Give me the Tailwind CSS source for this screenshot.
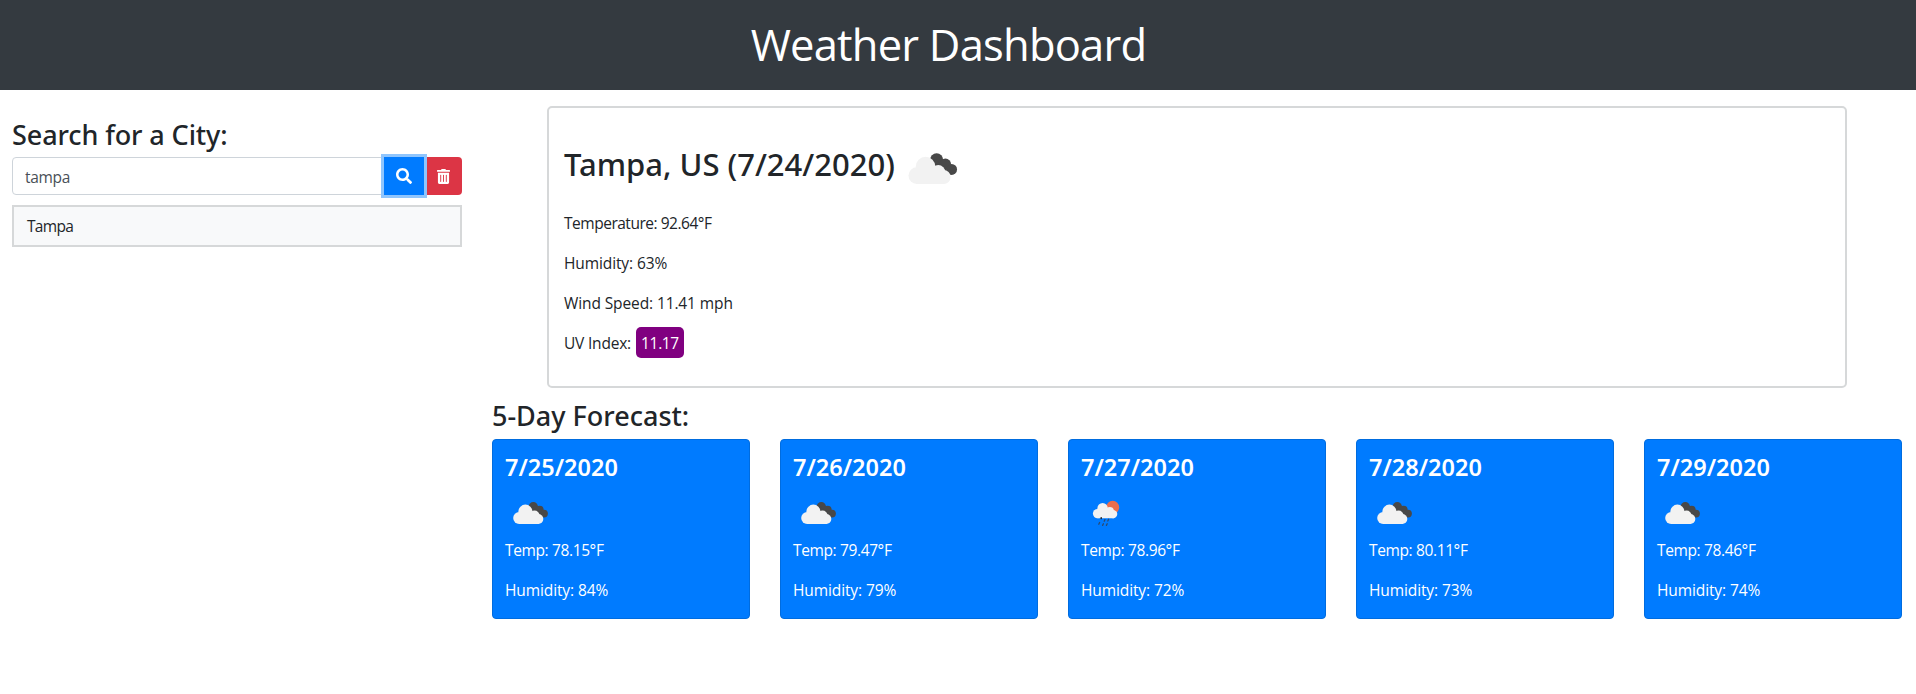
<!DOCTYPE html>
<html lang="en">
<head>
<meta charset="utf-8">
<title>Weather Dashboard</title>
<script src="https://cdn.jsdelivr.net/npm/@tailwindcss/browser@4"></script>
</head>
<body class="bg-white text-[#212529] font-['Open_Sans',sans-serif] text-[15.5px] leading-6">
<!-- Shared weather icons -->
<svg class="hidden">
  <symbol id="clouds" viewBox="0 0 50 50">
    <g fill="#484848"><circle cx="28.3" cy="17.8" r="4.7"/><circle cx="34.6" cy="20.8" r="4"/><circle cx="39" cy="24.600" r="3.900"/><path d="M26 16 38 27H30z"/></g>
    <g fill="#f2f2f2"><circle cx="14.2" cy="29" r="6"/><circle cx="20.4" cy="22.6" r="7"/><circle cx="29.5" cy="26.5" r="5"/><circle cx="33.3" cy="30" r="5"/><path d="M14 24h16l4 11H14z"/></g>
  </symbol>
  <symbol id="rain" viewBox="0 0 50 50">
    <circle cx="31.7" cy="18.3" r="6.5" fill="#ec6e4c"/>
    <g fill="#f2f2f2"><circle cx="16.6" cy="24.6" r="4.7"/><circle cx="21.6" cy="19.2" r="5.2"/><circle cx="28.8" cy="22.2" r="4.1"/><circle cx="32.1" cy="25.1" r="4.2"/><path d="M16 21h13l4 8.3H16.500z"/></g>
    <g stroke="#2c4a70" stroke-width="1.3" stroke-linecap="round"><path d="M20.200 28.800v.6" stroke="#222" stroke-width="1.500"/><path d="m24 30.500-.8 1.700M27.600 30.300l-.8 1.700M18.600 33.500l-.8 1.700M22.400 34.800l-.8 1.600M26.200 34.800l-.8 1.600"/></g>
  </symbol>
</svg>

<header class="h-[90px] bg-[#343a40] text-white flex justify-center pr-[19px]">
  <h1 class="mt-3 text-[43.5px] leading-[66px] tracking-[-0.78px]">Weather Dashboard</h1>
</header>

<div class="flex">
  <aside class="w-[450px] ml-3 mt-7 shrink-0">
    <h2 class="font-['Noto_Sans',sans-serif] font-medium text-[27px] leading-[33px] tracking-[-0.1px] mb-1.5">Search for a City:</h2>
    <div class="flex h-[38px]">
      <input value="tampa" class="w-[372px] h-[38px] border border-[#ced4da] rounded-l px-3 pt-px text-[#495057] tracking-[-0.3px]">
      <button class="relative z-10 w-10 bg-[#007bff] shadow-[0_0_0_3px_#8fc5fd] flex items-center justify-center" aria-label="Search">
        <svg class="size-4" viewBox="0 0 512 512" fill="#fff"><path d="M505 442.700 405.300 343c-4.500-4.500-10.600-7-17-7H372c27.600-35.300 44-79.700 44-128C416 93.100 322.900 0 208 0S0 93.100 0 208s93.100 208 208 208c48.300 0 92.700-16.400 128-44v16.300c0 6.400 2.500 12.500 7 17l99.700 99.700c9.400 9.400 24.600 9.400 33.900 0l28.300-28.300c9.400-9.400 9.400-24.600.1-34zM208 336c-70.700 0-128-57.200-128-128 0-70.700 57.200-128 128-128 70.700 0 128 57.200 128 128 0 70.700-57.200 128-128 128z"/></svg>
      </button>
      <button class="w-[38px] bg-[#dc3545] rounded-r flex items-center justify-center" aria-label="Clear">
        <svg class="w-[13px] h-[15px]" viewBox="0 0 448 512" fill="#fff"><path d="M32 464a48 48 0 0 0 48 48h288a48 48 0 0 0 48-48V128H32zm272-256a16 16 0 0 1 32 0v224a16 16 0 0 1-32 0zm-96 0a16 16 0 0 1 32 0v224a16 16 0 0 1-32 0zm-96 0a16 16 0 0 1 32 0v224a16 16 0 0 1-32 0zM432 32H312l-9.400-18.700A24 24 0 0 0 281.100 0H166.800a23.700 23.700 0 0 0-21.400 13.300L136 32H16A16 16 0 0 0 0 48v32a16 16 0 0 0 16 16h416a16 16 0 0 0 16-16V48a16 16 0 0 0-16-16z"/></svg>
      </button>
    </div>
    <ul class="mt-2.5">
      <li class="h-[42px] border-2 border-[#d6d8d9] bg-[#f8f9fa] px-[13px] pt-[7px] tracking-[-0.7px]">Tampa</li>
    </ul>
  </aside>

  <main class="w-[1410px] ml-[30px] shrink-0 pt-4">
    <section class="ml-[55px] w-[1300px] h-[282px] border-2 border-[#d6d8d9] rounded-[5px] pl-[15px] pt-[27px]">
      <div class="flex h-[70px]">
        <h2 class="w-[333px] whitespace-nowrap font-['Noto_Sans',sans-serif] font-medium text-[31px] leading-[38px] pt-2.5">Tampa, US (7/24/2020)</h2>
        <svg class="size-[70px]"><use href="#clouds"/></svg>
      </div>
      <div class="flex flex-col gap-4 pt-1.5">
        <p class="tracking-[-0.48px]">Temperature: 92.64°F</p>
        <p class="tracking-[-0.11px]">Humidity: 63%</p>
        <p class="tracking-[-0.11px]">Wind Speed: 11.41 mph</p>
        <p class="flex tracking-[-0.2px]"><span class="w-[72px]">UV Index:</span><span class="w-12 h-[31px] -mt-1 pt-1 rounded-[5px] bg-[#800080] text-white text-center tracking-[-0.35px]">11.17</span></p>
      </div>
    </section>

    <h2 class="mt-[11px] mb-1.5 font-['Noto_Sans',sans-serif] font-medium text-[27px] leading-[34px]">5-Day Forecast:</h2>
    <section class="grid grid-cols-5 gap-[30px] text-white">
      <article class="h-[180px] bg-[#007bff] border border-[#006cdf] rounded p-3 flex flex-col">
        <h3 class="font-['Noto_Sans',sans-serif] font-semibold text-[23.5px] leading-[29px] mt-px mb-[7px]">7/25/2020</h3>
        <svg class="size-[50px] shrink-0 -mb-px"><use href="#clouds"/></svg>
        <p class="mb-4 tracking-[-0.37px]">Temp: 78.15°F</p>
        <p class="tracking-[-0.11px]">Humidity: 84%</p>
      </article>
      <article class="h-[180px] bg-[#007bff] border border-[#006cdf] rounded p-3 flex flex-col">
        <h3 class="font-['Noto_Sans',sans-serif] font-semibold text-[23.5px] leading-[29px] mt-px mb-[7px]">7/26/2020</h3>
        <svg class="size-[50px] shrink-0 -mb-px"><use href="#clouds"/></svg>
        <p class="mb-4 tracking-[-0.37px]">Temp: 79.47°F</p>
        <p class="tracking-[-0.11px]">Humidity: 79%</p>
      </article>
      <article class="h-[180px] bg-[#007bff] border border-[#006cdf] rounded p-3 flex flex-col">
        <h3 class="font-['Noto_Sans',sans-serif] font-semibold text-[23.5px] leading-[29px] mt-px mb-[7px]">7/27/2020</h3>
        <svg class="size-[50px] shrink-0 -mb-px"><use href="#rain"/></svg>
        <p class="mb-4 tracking-[-0.37px]">Temp: 78.96°F</p>
        <p class="tracking-[-0.11px]">Humidity: 72%</p>
      </article>
      <article class="h-[180px] bg-[#007bff] border border-[#006cdf] rounded p-3 flex flex-col">
        <h3 class="font-['Noto_Sans',sans-serif] font-semibold text-[23.5px] leading-[29px] mt-px mb-[7px]">7/28/2020</h3>
        <svg class="size-[50px] shrink-0 -mb-px"><use href="#clouds"/></svg>
        <p class="mb-4 tracking-[-0.37px]">Temp: 80.11°F</p>
        <p class="tracking-[-0.11px]">Humidity: 73%</p>
      </article>
      <article class="h-[180px] bg-[#007bff] border border-[#006cdf] rounded p-3 flex flex-col">
        <h3 class="font-['Noto_Sans',sans-serif] font-semibold text-[23.5px] leading-[29px] mt-px mb-[7px]">7/29/2020</h3>
        <svg class="size-[50px] shrink-0 -mb-px"><use href="#clouds"/></svg>
        <p class="mb-4 tracking-[-0.37px]">Temp: 78.46°F</p>
        <p class="tracking-[-0.11px]">Humidity: 74%</p>
      </article>
    </section>
  </main>
</div>
</body>
</html>
